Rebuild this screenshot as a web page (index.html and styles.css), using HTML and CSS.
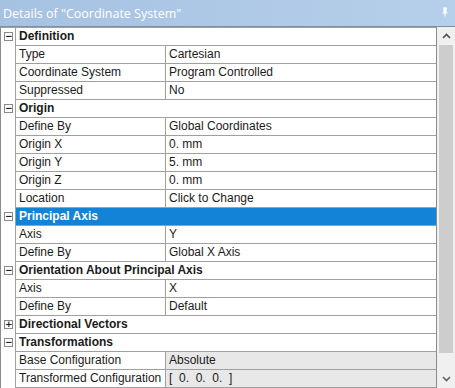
FILE: index.html
```html
<!DOCTYPE html>
<html>
<head>
<meta charset="utf-8">
<link rel="stylesheet" href="styles.css">
</head>
<body>
<div class="window">
  <div class="titlebar">
    <span class="title">Details of "Coordinate System"</span>
    <svg class="pin" width="8" height="10" viewBox="0 0 8 10"><path d="M2 0.5h4v1h-0.5v4h1v1h-5v-1h1v-4h-0.5z M3.5 6.5h1v3h-1z" fill="#ffffff"/></svg>
  </div>
  <div class="body">
    <div class="grid">
      <div class="row"><div class="gut"><span class="box">−</span></div><div class="head">Definition</div></div>
      <div class="row"><div class="gut"></div><div class="name">Type</div><div class="val">Cartesian</div></div>
      <div class="row"><div class="gut"></div><div class="name">Coordinate System</div><div class="val">Program Controlled</div></div>
      <div class="row"><div class="gut"></div><div class="name">Suppressed</div><div class="val">No</div></div>
      <div class="row"><div class="gut"><span class="box">−</span></div><div class="head">Origin</div></div>
      <div class="row"><div class="gut"></div><div class="name">Define By</div><div class="val">Global Coordinates</div></div>
      <div class="row"><div class="gut"></div><div class="name">Origin X</div><div class="val">0. mm</div></div>
      <div class="row"><div class="gut"></div><div class="name">Origin Y</div><div class="val">5. mm</div></div>
      <div class="row"><div class="gut"></div><div class="name">Origin Z</div><div class="val">0. mm</div></div>
      <div class="row"><div class="gut"></div><div class="name">Location</div><div class="val">Click to Change</div></div>
      <div class="row"><div class="gut"><span class="box">−</span></div><div class="head selected">Principal Axis</div></div>
      <div class="row"><div class="gut"></div><div class="name">Axis</div><div class="val">Y</div></div>
      <div class="row"><div class="gut"></div><div class="name">Define By</div><div class="val">Global X Axis</div></div>
      <div class="row"><div class="gut"><span class="box">−</span></div><div class="head">Orientation About Principal Axis</div></div>
      <div class="row"><div class="gut"></div><div class="name">Axis</div><div class="val">X</div></div>
      <div class="row"><div class="gut"></div><div class="name">Define By</div><div class="val">Default</div></div>
      <div class="row"><div class="gut"><span class="box">+</span></div><div class="head">Directional Vectors</div></div>
      <div class="row"><div class="gut"><span class="box">−</span></div><div class="head">Transformations</div></div>
      <div class="row"><div class="gut"></div><div class="name">Base Configuration</div><div class="val ro">Absolute</div></div>
      <div class="row"><div class="gut"></div><div class="name">Transformed Configuration</div><div class="val ro pre">[  0.  0.  0.  ]</div></div>
    </div>
    <div class="scroll">
      <div class="sbtn"><svg width="9" height="6" viewBox="0 0 9 6"><path d="M1 5 L4.5 1.5 L8 5" fill="none" stroke="#505050" stroke-width="1.6"/></svg></div>
      <div class="track"><div class="thumb"></div></div>
      <div class="sbtn"><svg width="9" height="6" viewBox="0 0 9 6"><path d="M1 1 L4.5 4.5 L8 1" fill="none" stroke="#606060" stroke-width="1.6"/></svg></div>
    </div>
  </div>
</div>
</body>
</html>
```

FILE: styles.css
```css
html, body {
  margin: 0;
  padding: 0;
  background: #ffffff;
}
.window {
  width: 455px;
  height: 388px;
  display: flex;
  flex-direction: column;
  font-family: "Liberation Sans", Arial, sans-serif;
  font-size: 12px;
  color: #1b1b1b;
  overflow: hidden;
}
.titlebar {
  height: 26px;
  border-bottom: 1px solid #7f8fa0;
  background: linear-gradient(to right, #a6c2e2, #b6cfea);
  display: flex;
  align-items: center;
  justify-content: space-between;
  padding: 0 6px 0 3px;
  box-sizing: content-box;
}
.title {
  color: #ffffff;
  font-family: "Open Sans", "Liberation Sans", sans-serif;
  font-size: 12.5px;
}
.pin {
  margin-top: -2px;
}
.body {
  flex: 1;
  display: flex;
  min-height: 0;
}
.grid {
  width: 437px;
  border-top: 1px solid #a0a0a0;
  border-left: 1px solid #8c8c8c;
  border-right: 1px solid #8c8c8c;
  box-sizing: border-box;
  display: flex;
  flex-direction: column;
}
.row {
  display: flex;
  height: 18px;
  flex: none;
}
.gut {
  width: 14px;
  border-right: 1px solid #a0a0a0;
  display: flex;
  align-items: center;
  justify-content: center;
  flex: none;
}
.box {
  width: 7px;
  height: 7px;
  border: 1px solid #8a8a8a;
  background: #ffffff;
  font-size: 9px;
  line-height: 7px;
  text-align: center;
  color: #222;
  font-family: "DejaVu Sans", sans-serif;
  font-weight: bold;
  margin-top: -1px;
  margin-left: 1px;
}
.name, .val, .head {
  border-bottom: 1px solid #a0a0a0;
  height: 18px;
  box-sizing: border-box;
  line-height: 17px;
  white-space: nowrap;
  overflow: hidden;
}
.name {
  width: 150px;
  border-right: 1px solid #a0a0a0;
  padding-left: 3px;
  flex: none;
}
.val {
  flex: 1;
  padding-left: 3px;
}
.val.ro {
  background: #e8e8e8;
}
.val.pre {
  white-space: pre;
}
.head {
  flex: 1;
  font-weight: bold;
  padding-left: 3px;
}
.head.selected {
  background: #1383d8;
  color: #ffffff;
}
.scroll {
  width: 18px;
  display: flex;
  flex-direction: column;
  background: #f0f0f0;
}
.sbtn {
  height: 18px;
  display: flex;
  align-items: center;
  justify-content: center;
  flex: none;
}
.track {
  flex: 1;
  padding: 0 2px 17px 2px;
}
.thumb {
  height: 100%;
  background: #cdcdcd;
}
```
